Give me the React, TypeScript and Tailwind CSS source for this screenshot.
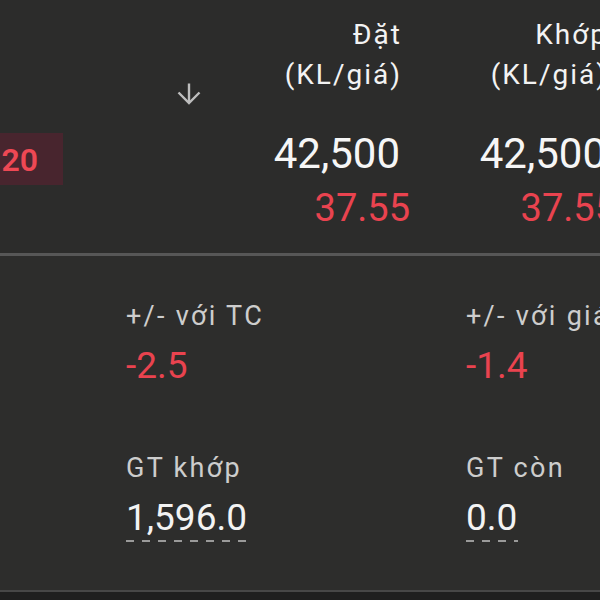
const font = { fontFamily: "Roboto, 'Noto Sans', sans-serif" };

function DownArrow() {
  return (
    <svg width="24" height="22" viewBox="0 0 24 22" fill="none" stroke="#bdbdbd" strokeWidth="2.4">
      <path d="M12 0.5V20" />
      <path d="M1.5 9.5L12 20L22.5 9.5" />
    </svg>
  );
}

function Dashed({ width }: { width: number }) {
  return (
    <div
      className="h-[2px] bg-[linear-gradient(to_right,#9a9a9a_8px,transparent_8px)] bg-[length:16px_2px] bg-repeat-x"
      style={{ width }}
    />
  );
}

function Stat({ label, value, red, dash }: { label: string; value: string; red?: boolean; dash?: number }) {
  return (
    <div className="flex flex-col items-start">
      <div className="text-[27px] leading-[36px] tracking-[2.3px] text-[#cdcdcd]">{label}</div>
      <div className={`mt-[10px] text-[37px] leading-[44px] ${red ? "text-[#e9434f]" : "text-[#f3f3f3]"}`}>
        {value}
      </div>
      {dash ? <Dashed width={dash} /> : null}
    </div>
  );
}

function OrderCol({ title, width }: { title: string; width: string }) {
  return (
    <div className={`${width} shrink-0 pt-[15px] text-right`}>
      <div className="pr-[8px] text-[28px] leading-[40px] tracking-[2px] text-[#f3f3f3]">
        {title}
        <br />
        (KL/giá)
      </div>
      <div className="mt-[34px] pr-[10px] text-[42px] leading-[50px] text-[#f6f6f6]">42,500</div>
      <div className="mt-[4px] text-[38px] leading-[50px] text-[#e9434f]">37.55</div>
    </div>
  );
}

export default function App() {
  return (
    <div className="w-[600px] h-[600px] overflow-hidden bg-[#2d2d2c] flex flex-col" style={font}>
      {/* top: order row */}
      <div className="h-[253px] flex shrink-0 bg-[#2c2c2b]">
        <div className="w-[63px] shrink-0 pt-[133px]">
          <div className="h-[52px] bg-[#48252e] flex justify-end pr-[25px] pt-[2px] text-[32px] leading-[50px] font-semibold text-[#ee4854]">
            20
          </div>
        </div>
        <div className="w-[157px] shrink-0 pl-[114px] pt-[83px]">
          <DownArrow />
        </div>
        <OrderCol title="Đặt" width="w-[190px]" />
        <OrderCol title="Khớp" width="w-[206px]" />
      </div>

      <div className="h-[3px] shrink-0 bg-[#575757]" />

      {/* details */}
      <div className="flex-1 flex flex-col">
        <div className="flex pl-[126px] pt-[42px]">
          <div className="w-[340px] shrink-0">
            <Stat label="+/- với TC" value="-2.5" red />
          </div>
          <div className="shrink-0">
            <Stat label="+/- với giá" value="-1.4" red />
          </div>
        </div>
        <div className="flex pl-[126px] pt-[62px]">
          <div className="w-[340px] shrink-0">
            <Stat label="GT khớp" value="1,596.0" dash={122} />
          </div>
          <div className="shrink-0">
            <Stat label="GT còn" value="0.0" dash={52} />
          </div>
        </div>
        <div className="flex-1" />
        <div className="h-[2px] shrink-0 bg-[#474747]" />
        <div className="h-[8px] shrink-0 bg-[#1f1f1f]" />
      </div>
    </div>
  );
}
